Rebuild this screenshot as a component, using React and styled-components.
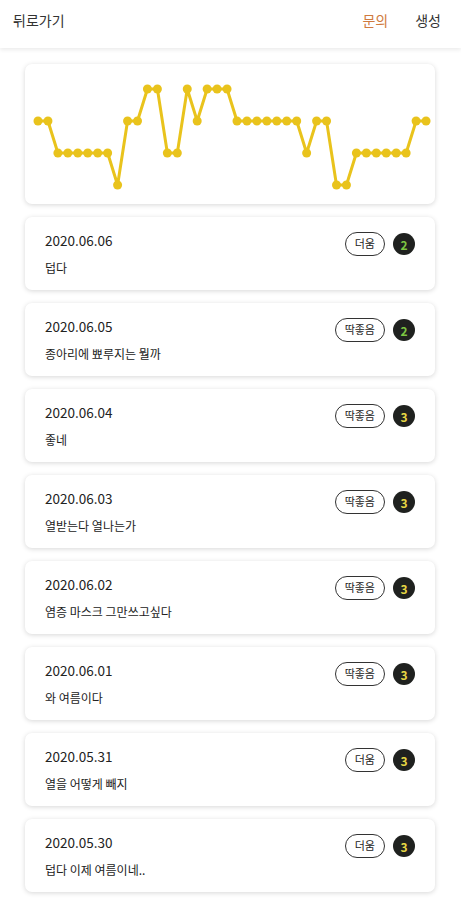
import React from "react";
import styled, { createGlobalStyle } from "styled-components";

const GlobalStyle = createGlobalStyle`
  body {
    margin: 0;
    background: #ffffff;
    font-family: "Noto Sans CJK KR", "Noto Sans", sans-serif;
    color: #222;
  }
`;

const Header = styled.div`
  height: 48px;
  box-sizing: border-box;
  padding: 10px 20px 0 13px;
  display: flex;
  align-items: flex-start;
  justify-content: space-between;
  box-shadow: 0 2px 4px rgba(0, 0, 0, 0.08);
  font-size: 14px;
  line-height: 20px;
`;

const Back = styled.span`
  color: #333;
`;

const Actions = styled.div`
  display: flex;
  gap: 27px;
`;

const Action = styled.span`
  color: ${({ active }) => (active ? "#d07a3e" : "#333")};
`;

const List = styled.div`
  display: flex;
  flex-direction: column;
  gap: 13px;
  padding: 16px 26px 20px 25px;
`;

const Card = styled.div`
  background: #fff;
  border-radius: 7px;
  box-shadow: 0 1px 5px rgba(0, 0, 0, 0.16);
`;

const ChartCard = styled(Card)`
  height: 140px;
`;

const Row = styled(Card)`
  height: 73px;
  box-sizing: border-box;
  padding: 14px 20px 0 20px;
  display: flex;
  justify-content: space-between;
`;

const Texts = styled.div`
  display: flex;
  flex-direction: column;
  gap: 10px;
`;

const DateText = styled.span`
  font-size: 13.5px;
  line-height: 18px;
  color: #222;
`;

const Body = styled.span`
  font-size: 12px;
  line-height: 18px;
  color: #222;
`;

const Tags = styled.div`
  display: flex;
  align-items: flex-start;
  gap: 8px;
  padding-top: 1px;
`;

const Pill = styled.span`
  height: 24px;
  box-sizing: border-box;
  padding: 0 9px;
  border: 1.3px solid #333;
  border-radius: 12px;
  font-size: 11px;
  line-height: 21px;
  color: #222;
`;

const Count = styled.span`
  width: 22px;
  height: 22px;
  margin-top: 1px;
  border-radius: 50%;
  background: #1f211f;
  color: ${({ level }) => (level === 2 ? "#7cc642" : "#e6d744")};
  font-size: 12px;
  font-weight: 700;
  display: flex;
  align-items: center;
  justify-content: center;
`;

const levels = [
  1, 1, 2, 2, 2, 2, 2, 2, 3, 1, 1, 0, 0, 2, 2, 0, 1, 0, 0, 0,
  1, 1, 1, 1, 1, 1, 1, 2, 1, 1, 3, 3, 2, 2, 2, 2, 2, 2, 1, 1,
];

const Chart = () => {
  const pts = levels.map((l, i) => [13 + i * 9.95, 25 + l * 32]);
  const d = pts.map((p, i) => `${i ? "L" : "M"}${p[0]} ${p[1]}`).join(" ");
  return (
    <svg width="410" height="140" viewBox="0 0 410 140">
      <path d={d} fill="none" stroke="#e9c31c" strokeWidth="3" strokeLinejoin="round" />
      {pts.map((p, i) => (
        <circle key={i} cx={p[0]} cy={p[1]} r="4.5" fill="#e9c31c" />
      ))}
    </svg>
  );
};

const entries = [
  { date: "2020.06.06", text: "덥다", tag: "더움", n: 2 },
  { date: "2020.06.05", text: "종아리에 뾰루지는 뭘까", tag: "딱좋음", n: 2 },
  { date: "2020.06.04", text: "좋네", tag: "딱좋음", n: 3 },
  { date: "2020.06.03", text: "열받는다 열나는가", tag: "딱좋음", n: 3 },
  { date: "2020.06.02", text: "염증 마스크 그만쓰고싶다", tag: "딱좋음", n: 3 },
  { date: "2020.06.01", text: "와 여름이다", tag: "딱좋음", n: 3 },
  { date: "2020.05.31", text: "열을 어떻게 빼지", tag: "더움", n: 3 },
  { date: "2020.05.30", text: "덥다 이제 여름이네..", tag: "더움", n: 3 },
];

export default function App() {
  return (
    <>
      <GlobalStyle />
      <Header>
        <Back>뒤로가기</Back>
        <Actions>
          <Action active>문의</Action>
          <Action>생성</Action>
        </Actions>
      </Header>
      <List>
        <ChartCard>
          <Chart />
        </ChartCard>
        {entries.map((e) => (
          <Row key={e.date}>
            <Texts>
              <DateText>{e.date}</DateText>
              <Body>{e.text}</Body>
            </Texts>
            <Tags>
              <Pill>{e.tag}</Pill>
              <Count level={e.n}>{e.n}</Count>
            </Tags>
          </Row>
        ))}
      </List>
    </>
  );
}
